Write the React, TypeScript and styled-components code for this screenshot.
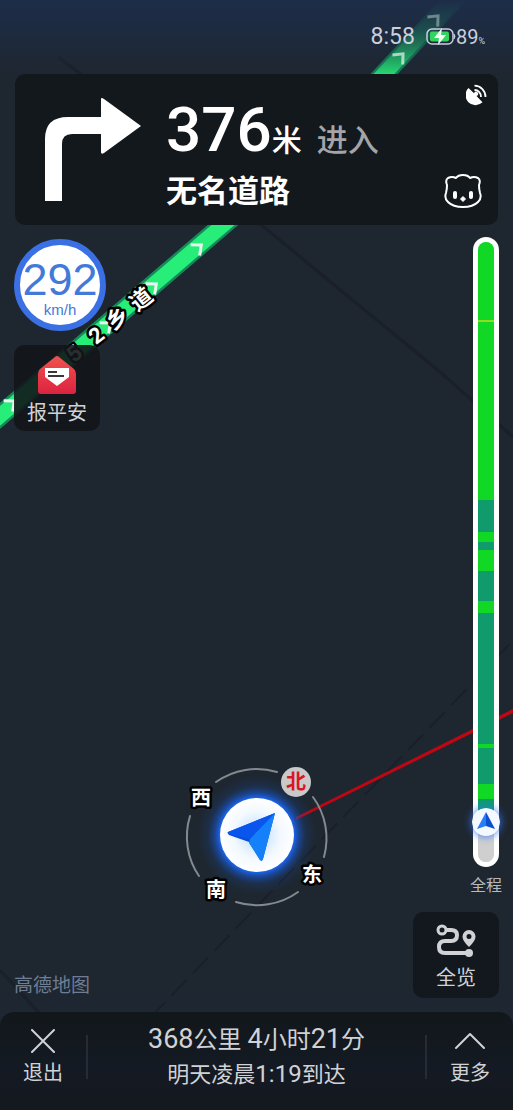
import React from "react";
import styled, { createGlobalStyle } from "styled-components";

const GlobalStyle = createGlobalStyle`
  *, *::before, *::after { box-sizing: border-box; }
  body {
    margin: 0;
    background: #1e2731;
    font-family: Roboto, "Noto Sans CJK SC", sans-serif;
    color: #d0d2d6;
  }
  button { font: inherit; color: inherit; border: 0; padding: 0; cursor: pointer; }
  svg { display: block; }
`;

const Screen = styled.div`
  position: relative;
  display: flex;
  flex-direction: column;
  min-height: 100vh;
  overflow: hidden;
`;

const MapCanvas = styled.svg`
  position: absolute;
  inset: 0;
  width: 100%;
  height: 100%;
`;

const StatusBar = styled.header`
  position: relative;
  display: flex;
  justify-content: flex-end;
  align-items: center;
  height: 74px;
  padding-right: 28px;
  color: #c9d0dc;
`;

const Clock = styled.time`
  font-size: 23px;
  line-height: 24px;
  margin-right: 11px;
`;

const Battery = styled.span`
  display: flex;
  align-items: center;
  font-size: 20px;
  line-height: 24px;
`;

const Percent = styled.small`
  font-size: 9px;
  padding-top: 8px;
`;

const GuidanceCard = styled.section`
  position: relative;
  display: flex;
  align-items: center;
  margin: 0 15px;
  min-height: 151px;
  padding-left: 30px;
  background: #13181d;
  border-radius: 10px;
`;

const GuidanceText = styled.div`
  flex: 1;
  margin-left: 25px;
  padding-top: 16px;
  color: #fff;
`;

const Distance = styled.p`
  margin: 0;
  display: flex;
  align-items: baseline;
  font-size: 30px;
  line-height: 58px;
  font-weight: 500;
`;

const DistanceValue = styled.strong`
  font-size: 62px;
  font-weight: 500;
`;

const Action = styled.span`
  margin-left: 15px;
  font-size: 31px;
  color: #a3a5a8;
`;

const RoadName = styled.h1`
  margin: 0;
  font-size: 31px;
  line-height: 44px;
  font-weight: 700;
`;

const CardIcons = styled.div`
  align-self: stretch;
  display: flex;
  flex-direction: column;
  justify-content: space-between;
  align-items: flex-end;
  padding: 10px 10px 17px 0;
`;

const IconButton = styled.button`
  display: block;
  background: none;
  margin-right: 6px;
`;

const Body = styled.main`
  position: relative;
  flex: 1;
  display: flex;
  justify-content: space-between;
  padding: 12px 10px 14px 14px;
`;

const LeftColumn = styled.div`
  display: flex;
  flex-direction: column;
  align-items: flex-start;
  padding-top: 2px;
`;

const SpeedDial = styled.div`
  display: flex;
  flex-direction: column;
  align-items: center;
  justify-content: center;
  width: 92px;
  height: 92px;
  padding-top: 6px;
  border: 6px solid #3a70e4;
  border-radius: 50%;
  background: #fff;
  color: #4379d8;
  font-family: "Liberation Sans", sans-serif;
`;

const SpeedValue = styled.span`
  font-size: 45px;
  line-height: 44px;
`;

const SpeedUnit = styled.span`
  font-size: 15px;
  line-height: 16px;
`;

const TileButton = styled.button<{ $tone: string }>`
  display: flex;
  flex-direction: column;
  align-items: center;
  justify-content: center;
  gap: 6px;
  width: 86px;
  height: 86px;
  padding-top: 4px;
  border-radius: 10px;
  background: ${(p) => p.$tone};
  font-size: 20px;
  line-height: 24px;
`;

const ReportSlot = styled.div`
  margin-top: 14px;
`;

const MapBrand = styled.span`
  margin-top: auto;
  font-size: 19px;
  line-height: 24px;
  color: #6f7d94;
`;

const RightColumn = styled.div`
  display: flex;
  flex-direction: column;
  align-items: flex-end;
`;

const Trip = styled.section`
  flex: 1;
  display: flex;
  flex-direction: column;
  align-items: center;
  width: 34px;
`;

const TripTrack = styled.div`
  flex: 1;
  display: flex;
  width: 26px;
  padding: 5px;
  border-radius: 13px;
  background: #fff;
`;

const TripSegments = styled.div`
  position: relative;
  flex: 1;
  display: flex;
  flex-direction: column;
  border-radius: 8px;
  background: #cfcfcf;
`;

const Segment = styled.div<{ $length: number; $color: string }>`
  flex: ${(p) => p.$length} 1 0;
  background: ${(p) => p.$color};
  &:first-child { border-radius: 8px 8px 0 0; }
`;

const Remaining = styled(Segment)`
  position: relative;
  border-radius: 0 0 8px 8px;
`;

const TripMarker = styled.svg`
  position: absolute;
  top: -14px;
  left: -6px;
  border-radius: 50%;
  box-shadow: 0 0 8px #3575ff;
`;

const TripLabel = styled.span`
  font-size: 16px;
  line-height: 20px;
  margin: 9px 0 16px;
  color: #b6b9be;
`;

const OverviewSlot = styled.div`
  margin-right: 4px;
`;

const BottomBar = styled.footer`
  position: relative;
  display: flex;
  align-items: center;
  min-height: 98px;
  padding-bottom: 8px;
  border-radius: 14px 14px 0 0;
  background: linear-gradient(#12171b, #141a23 60%, #14191f);
`;

const BarButton = styled.button`
  display: flex;
  flex-direction: column;
  align-items: center;
  gap: 8px;
  width: 86px;
  background: none;
  font-size: 20px;
  line-height: 24px;
`;

const Divider = styled.span`
  width: 2px;
  height: 44px;
  background: #262b36;
`;

const Summary = styled.div`
  flex: 1;
  text-align: center;
  white-space: nowrap;
`;

const SummaryLine = styled.p<{ $size: number; $digits: number }>`
  margin: 0;
  font-size: ${(p) => p.$size}px;
  line-height: 34px;
  b {
    font-weight: 400;
    font-size: ${(p) => p.$digits}px;
  }
`;

const GREEN = "#11d824";
const TEAL = "#0f9b6c";

const segments = [
  { length: 78, color: GREEN },
  { length: 2, color: "#8fdc22" },
  { length: 178, color: GREEN },
  { length: 32, color: TEAL },
  { length: 10, color: GREEN },
  { length: 8, color: TEAL },
  { length: 22, color: GREEN },
  { length: 30, color: TEAL },
  { length: 12, color: GREEN },
  { length: 131, color: TEAL },
  { length: 4, color: GREEN },
  { length: 36, color: TEAL },
  { length: 15, color: GREEN },
  { length: 23, color: TEAL },
];

const roadPath = "M-20 433 L223 225 L322 140 L384 74 L472 -20";

const chevrons = [
  { x: 436, y: 18, turn: -47, fade: 0.4 },
  { x: 401, y: 56, turn: -47, fade: 0.7 },
  { x: 199, y: 247, turn: -40, fade: 1 },
  { x: 154, y: 286, turn: -40, fade: 1 },
  { x: 108, y: 325, turn: -40, fade: 1 },
  { x: 12, y: 403, turn: -40, fade: 1 },
];

const roadLetters = [
  { text: "5", x: 74, y: 353 },
  { text: "2", x: 96, y: 335 },
  { text: "乡", x: 117, y: 318 },
  { text: "道", x: 141, y: 299 },
];

const directions = [
  { text: "西", x: 201, y: 798 },
  { text: "南", x: 216, y: 890 },
  { text: "东", x: 312, y: 875 },
];

function NavigationMap() {
  return (
    <MapCanvas viewBox="0 0 513 1110" preserveAspectRatio="xMidYMid slice">
      <defs>
        <linearGradient id="sky" x1="0" y1="0" x2="0" y2="1">
          <stop offset="0" stopColor="#1d2d47" />
          <stop offset="0.35" stopColor="#1d2d47" stopOpacity="0.75" />
          <stop offset="1" stopColor="#1e2a39" stopOpacity="0" />
        </linearGradient>
        <linearGradient id="road" gradientUnits="userSpaceOnUse" x1="0" y1="0" x2="0" y2="74">
          <stop offset="0" stopColor="#27ee78" stopOpacity="0.15" />
          <stop offset="0.4" stopColor="#27ee78" stopOpacity="0.35" />
          <stop offset="1" stopColor="#27ee78" />
        </linearGradient>
        <linearGradient id="ground" x1="0" y1="0" x2="0" y2="1">
          <stop offset="0" stopColor="#1e2630" />
          <stop offset="0.85" stopColor="#1e2730" />
          <stop offset="1" stopColor="#1e2733" />
        </linearGradient>
        <radialGradient id="glow">
          <stop offset="0.6" stopColor="#1c6cff" />
          <stop offset="0.7" stopColor="#185ad6" stopOpacity="0.6" />
          <stop offset="0.82" stopColor="#174a9e" stopOpacity="0.22" />
          <stop offset="1" stopColor="#17407f" stopOpacity="0" />
        </radialGradient>
        <radialGradient id="puck">
          <stop offset="0" stopColor="#b9dcff" />
          <stop offset="0.65" stopColor="#f3f9ff" />
          <stop offset="1" stopColor="#ffffff" />
        </radialGradient>
      </defs>
      <rect x="-2000" width="4513" height="1110" fill="url(#ground)" />
      <g fill="none" stroke="#1a1f29" strokeWidth="3">
        <path d="M58 57 L82 75 L265 228 L440 372 L513 437" />
        <path d="M0 970 L40 1014" />
        <path d="M150 1018 L270 893 L440 717 L520 633" strokeWidth="2" strokeDasharray="22 9" />
      </g>
      <path d={roadPath} fill="none" stroke="#148a5b" strokeWidth="20" />
      <path d={roadPath} fill="none" stroke="url(#road)" strokeWidth="15" />
      <rect x="-2000" width="4513" height="82" fill="url(#sky)" />
      {chevrons.map((c) => (
        <path
          key={c.x}
          d="M-5 -7 L3 0 L-5 7"
          transform={`translate(${c.x} ${c.y}) rotate(${c.turn})`}
          opacity={c.fade}
          fill="none"
          stroke="#e9f5ef"
          strokeWidth="3"
        />
      ))}
      <g fontSize="22" fontWeight="700" textAnchor="middle" fill="#fff" stroke="#000" strokeWidth="5" strokeLinejoin="round" paintOrder="stroke">
        {roadLetters.map((l) => (
          <text key={l.text} transform={`translate(${l.x} ${l.y}) rotate(-38)`} y="8">
            {l.text}
          </text>
        ))}
      </g>
      <path d="M296 817 L513 709 L1500 218 L1500 222 L513 713 L296 820 Z" fill="#bd0814" />
      <g fill="none" stroke="#84898f" strokeWidth="2" strokeLinecap="round">
        <path d="M216 782 A70 70 0 0 1 277 772" />
        <path d="M313 797 A70 70 0 0 1 324 857" />
        <path d="M298 892 A70 70 0 0 1 236 902" />
        <path d="M199 876 A70 70 0 0 1 190 816" />
      </g>
      <circle cx="257" cy="835" r="60" fill="url(#glow)" />
      <circle cx="257" cy="835" r="37" fill="url(#puck)" />
      <path d="M275 813 L228 832 Q227 833 229 835 L249 842 L260 860 Q262 862 263 859 Z" fill="#0b4fd8" />
      <path d="M275 813 L228 832 Q227 833 229 834 L250 839 Z" fill="#0a55ee" />
      <path d="M275 813 L250 839 L249 843 L260 860 Q262 862 263 859 Z" fill="#1480fa" />
      <circle cx="296" cy="782" r="15" fill="#c9c9c9" />
      <g fontSize="20" fontWeight="700" textAnchor="middle">
        <text x="296" y="789" fill="#dc1523">北</text>
        <g fill="#fff" stroke="#000" strokeWidth="5" strokeLinejoin="round" paintOrder="stroke">
          {directions.map((d) => (
            <text key={d.text} x={d.x} y={d.y + 7}>{d.text}</text>
          ))}
        </g>
      </g>
    </MapCanvas>
  );
}

function BatteryIcon() {
  return (
    <svg width="30" height="18" viewBox="0 0 30 18" aria-hidden="true">
      <rect x="1" y="1" width="26" height="15" rx="5" fill="none" stroke="#c9d0dc" strokeWidth="1.5" />
      <path d="M28 6 Q30 8 28 11" fill="#c9d0dc" stroke="#c9d0dc" />
      <rect x="4" y="3.5" width="19" height="10" rx="2" fill="#35d45f" />
      <path d="M16 0 L8 10 H13 L12 17 L20 7 H15 Z" fill="#f2fff6" />
    </svg>
  );
}

function TurnArrow() {
  return (
    <svg width="96" height="104" viewBox="0 0 96 104" role="img" aria-label="右转">
      <path d="M0 103 V41 Q0 19 23 19 H56 V1 Q56 -1 59 1 L96 28 L59 55 Q56 57 56 54 V36 H27 Q17 36 17 46 V103 Z" fill="#fff" />
    </svg>
  );
}

function SatelliteIcon() {
  return (
    <svg width="22" height="22" viewBox="0 0 22 22" role="img" aria-label="卫星信号">
      <path d="M2.500 4 L8 9.200 A2.200 2.200 0 1 1 10.500 12 L16.500 18.300 A9.400 9.400 0 0 1 2.500 4 Z" fill="#fff" />
      <path d="M8.500 6 A6.500 6.500 0 0 1 15 13" fill="none" stroke="#fff" strokeWidth="1.800" />
      <path d="M8.500 1.700 A11 11 0 0 1 19.500 13" fill="none" stroke="#fff" strokeWidth="1.800" />
    </svg>
  );
}

function AssistantIcon() {
  return (
    <svg width="38" height="34" viewBox="0 0 38 34" aria-hidden="true">
      <path
        d="M12 4 Q8 2 4 4 Q1 6 3 11 Q3 15 2 19 Q0 24 4 28 Q9 33 19 33 Q29 33 34 28 Q38 24 36 19 Q35 15 35 11 Q37 6 34 4 Q30 2 26 4 Q24 1 19 1 Q14 1 12 4 Z"
        fill="none"
        stroke="#fff"
        strokeWidth="2"
        strokeLinejoin="round"
      />
      <rect x="9" y="17" width="4" height="8" rx="2" fill="#fff" />
      <rect x="25" y="17" width="4" height="8" rx="2" fill="#fff" />
      <path d="M19 22.500 L21.500 25 L19 27.500 L16.500 25 Z" fill="#fff" stroke="#fff" strokeLinejoin="round" />
    </svg>
  );
}

function EnvelopeIcon() {
  return (
    <svg width="40" height="40" viewBox="0 0 40 40" aria-hidden="true">
      <defs>
        <linearGradient id="envelope" x1="0" y1="0" x2="0" y2="1">
          <stop offset="0" stopColor="#f0524f" />
          <stop offset="1" stopColor="#dc2340" />
        </linearGradient>
      </defs>
      <path d="M18 2 Q20 0 22 2 L37 14 Q39 16 39 19 V36 Q39 39 36 39 H4 Q1 39 1 36 V19 Q1 16 3 14 Z" fill="url(#envelope)" />
      <path d="M8 13 H32 V22 L20 31 L8 22 Z" fill="#fff" />
      <path d="M11 17 H20 M11 21 H27" stroke="#3d3438" strokeWidth="2" />
    </svg>
  );
}

function OverviewIcon() {
  return (
    <svg width="40" height="36" viewBox="0 0 40 36" aria-hidden="true">
      <g fill="none" stroke="#d0d2d6" strokeWidth="4">
        <circle cx="6" cy="6" r="4" strokeWidth="3" />
        <path d="M10 6 H15 Q21 6 21 11 Q21 17 15 17 H9 Q3 17 3 23 Q3 29 9 29 H31" />
      </g>
      <path
        d="M33 6 A6.500 6.500 0 0 1 39.500 12.500 Q39.500 17 33 23 Q26.500 17 26.500 12.500 A6.500 6.500 0 0 1 33 6 Z M33 10 A2.500 2.500 0 1 0 33 15 A2.500 2.500 0 1 0 33 10 Z"
        fill="#d0d2d6"
        fillRule="evenodd"
      />
      <circle cx="33" cy="29" r="4" fill="#d0d2d6" />
    </svg>
  );
}

export default function App() {
  return (
    <Screen>
      <GlobalStyle />
      <NavigationMap />

      <StatusBar>
        <Clock>8:58</Clock>
        <Battery>
          <BatteryIcon />
          89
          <Percent>%</Percent>
        </Battery>
      </StatusBar>

      <GuidanceCard>
        <TurnArrow />
        <GuidanceText>
          <Distance>
            <DistanceValue>376</DistanceValue>米<Action>进入</Action>
          </Distance>
          <RoadName>无名道路</RoadName>
        </GuidanceText>
        <CardIcons>
          <SatelliteIcon />
          <IconButton type="button" aria-label="语音助手">
            <AssistantIcon />
          </IconButton>
        </CardIcons>
      </GuidanceCard>

      <Body>
        <LeftColumn>
          <SpeedDial>
            <SpeedValue>292</SpeedValue>
            <SpeedUnit>km/h</SpeedUnit>
          </SpeedDial>
          <ReportSlot>
            <TileButton type="button" $tone="rgba(18, 22, 26, 0.9)">
              <EnvelopeIcon />
              报平安
            </TileButton>
          </ReportSlot>
          <MapBrand>高德地图</MapBrand>
        </LeftColumn>

        <RightColumn>
          <Trip>
            <TripTrack>
              <TripSegments>
                {segments.map((s, i) => (
                  <Segment key={i} $length={s.length} $color={s.color} />
                ))}
                <Remaining $length={40} $color="#cfcfcf">
                  <TripMarker width="28" height="28" viewBox="0 0 28 28">
                    <circle cx="14" cy="14" r="14" fill="#f4f9ff" />
                    <path d="M14 4 L5 21 L14 18 Z" fill="#2b7df5" />
                    <path d="M14 4 L23 21 L14 18 Z" fill="#0b4fd0" />
                  </TripMarker>
                </Remaining>
              </TripSegments>
            </TripTrack>
            <TripLabel>全程</TripLabel>
          </Trip>
          <OverviewSlot>
            <TileButton type="button" $tone="#13181e">
              <OverviewIcon />
              全览
            </TileButton>
          </OverviewSlot>
        </RightColumn>
      </Body>

      <BottomBar>
        <BarButton type="button">
          <svg width="24" height="24" viewBox="0 0 24 24" fill="none" stroke="#d0d2d6" strokeWidth="2" strokeLinecap="round" aria-hidden="true">
            <path d="M1 1 L23 23 M23 1 L1 23" />
          </svg>
          退出
        </BarButton>
        <Divider />
        <Summary>
          <SummaryLine $size={24} $digits={27}>
            <b>368</b>公里 <b>4</b>小时<b>21</b>分
          </SummaryLine>
          <SummaryLine $size={22} $digits={24}>
            明天凌晨<b>1:19</b>到达
          </SummaryLine>
        </Summary>
        <Divider />
        <BarButton type="button">
          <svg width="30" height="24" viewBox="0 0 30 24" fill="none" stroke="#d0d2d6" strokeWidth="2" strokeLinecap="round" strokeLinejoin="round" aria-hidden="true">
            <path d="M1 19 L15 5 L29 19" />
          </svg>
          更多
        </BarButton>
      </BottomBar>
    </Screen>
  );
}
